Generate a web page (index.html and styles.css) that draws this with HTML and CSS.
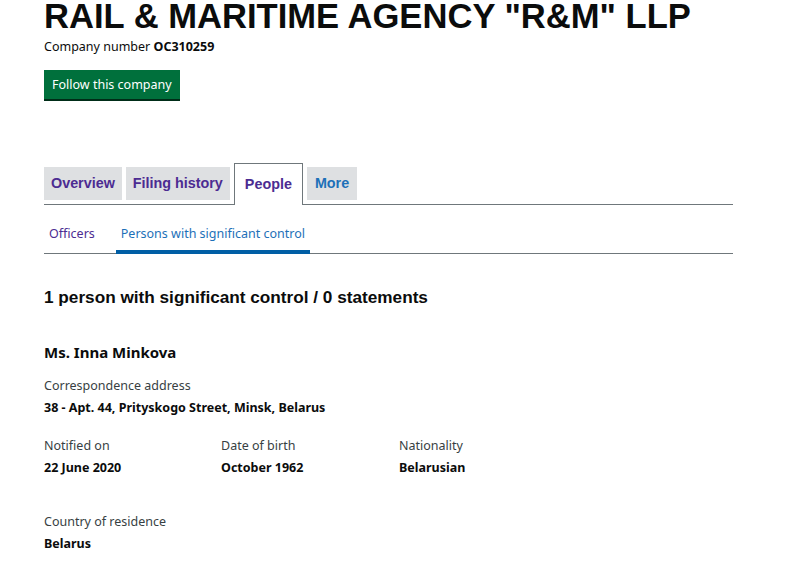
FILE: index.html
```html
<!DOCTYPE html>
<html>
<head>
<meta charset="utf-8">
<link rel="stylesheet" href="styles.css">
</head>
<body>
<main class="page">
  <h1 class="title">RAIL &amp; MARITIME AGENCY "R&amp;M" LLP</h1>
  <p class="company-number">Company number <strong>OC310259</strong></p>
  <div class="actions">
    <a class="button" href="#">Follow this company</a>
  </div>

  <nav class="tabs">
    <a class="tab visited" href="#">Overview</a>
    <a class="tab visited" href="#">Filing history</a>
    <a class="tab active" href="#">People</a>
    <a class="tab link" href="#">More</a>
  </nav>

  <nav class="subnav">
    <a class="sub visited" href="#">Officers</a>
    <a class="sub current" href="#">Persons with significant control</a>
  </nav>

  <h2 class="count">1 person with significant control / 0 statements</h2>

  <h3 class="name">Ms. Inna Minkova</h3>
  <dl class="field">
    <dt>Correspondence address</dt>
    <dd>38 - Apt. 44, Prityskogo Street, Minsk, Belarus</dd>
  </dl>

  <div class="row">
    <dl class="field col">
      <dt>Notified on</dt>
      <dd>22 June 2020</dd>
    </dl>
    <dl class="field col">
      <dt>Date of birth</dt>
      <dd>October 1962</dd>
    </dl>
    <dl class="field col">
      <dt>Nationality</dt>
      <dd>Belarusian</dd>
    </dl>
  </div>

  <dl class="field residence">
    <dt>Country of residence</dt>
    <dd>Belarus</dd>
  </dl>
</main>
</body>
</html>
```

FILE: styles.css
```css
* { box-sizing: border-box; }
html, body { margin: 0; padding: 0; background: #fff; }
body {
  font-family: "Noto Sans", "Liberation Sans", sans-serif;
  color: #0b0c0c;
  overflow: hidden;
}
.page {
  width: 689px;
  margin-left: 44px;
}
.title {
  font-family: "Liberation Sans", Arial, sans-serif;
  font-weight: 700;
  font-size: 34.6px;
  line-height: 36px;
  margin: -2px 0 0;
  white-space: nowrap;
}
.company-number {
  font-size: 12.5px;
  line-height: 18px;
  margin: 4px 0 0;
  color: #0b0c0c;
}
.company-number strong { font-weight: 700; }
.actions {
  display: flex;
  margin-top: 14px;
}
.button {
  display: block;
  background: #00703c;
  color: #fff;
  text-decoration: none;
  font-size: 12.5px;
  line-height: 17px;
  padding: 6px 8px 6px;
  border-bottom: 2px solid #002d18;
}
.tabs {
  margin-top: 62px;
  display: flex;
  align-items: flex-end;
  gap: 4px;
  border-bottom: 1px solid #6f777b;
  height: 42px;
}
.tab {
  font-family: "Liberation Sans", Arial, sans-serif;
  font-weight: 700;
  font-size: 14.35px;
  text-decoration: none;
  background: #dee0e2;
  height: 33px;
  line-height: 33px;
  padding: 0 7px;
  margin-bottom: 4px;
}
.tab.visited { color: #4c2c92; }
.tab.link { color: #1d70b8; padding: 0 8px; }
.tab.active {
  background: #fff;
  color: #4c2c92;
  border: 1px solid #6f777b;
  border-bottom: none;
  height: 42px;
  line-height: 40px;
  padding: 0 10px;
  margin-bottom: -1px;
}
.subnav {
  display: flex;
  border-bottom: 1px solid #6f777b;
  height: 49px;
  align-items: stretch;
}
.sub {
  font-size: 12.5px;
  text-decoration: none;
  padding: 20px 5px 0;
  border-bottom: 4px solid transparent;
  margin-bottom: -1px;
}
.sub.visited { color: #4c2c92; margin-right: 16px; }
.sub.current { color: #1d70b8; border-bottom-color: #005ea5; }
.count {
  font-family: "Liberation Sans", Arial, sans-serif;
  font-weight: 700;
  font-size: 17.2px;
  line-height: 20px;
  margin: 33px 0 0;
}
.name {
  font-weight: 700;
  font-size: 15px;
  line-height: 20px;
  margin: 35px 0 0;
}
.field { margin: 0; }
.field dt {
  font-size: 12.5px;
  line-height: 18px;
  color: #383f43;
}
.field dd {
  margin: 4px 0 0;
  font-size: 12.5px;
  line-height: 18px;
  font-weight: 700;
}
.name + .field { margin-top: 15px; }
.row {
  display: grid;
  grid-template-columns: 177px 178px 1fr;
  margin-top: 20px;
}
.residence { margin-top: 36px; }
```
